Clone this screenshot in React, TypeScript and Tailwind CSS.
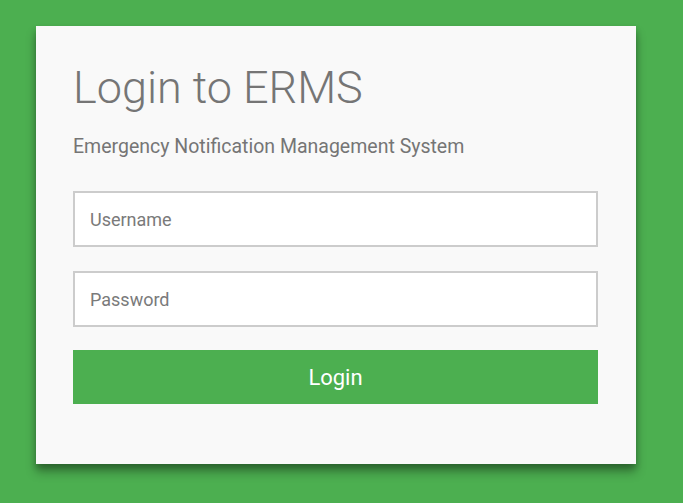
import React from 'react';

export default function App() {
  return (
    <div
      className="min-h-screen bg-[#4caf50] pt-[26px] pl-[36px]"
      style={{ fontFamily: 'Roboto, "Open Sans", sans-serif' }}
    >
      <div className="w-[600px] h-[438px] bg-[#f9f9f9] shadow-[0_8px_10px_rgba(0,0,0,0.3),0_4px_6px_rgba(0,0,0,0.2)] px-[37px] pt-[36px]">
        <h1 className="text-[45px] font-light leading-[52px] text-[#757575]">Login to ERMS</h1>
        <p className="mt-[21px] text-[19.5px] leading-[24px] text-[#757575]">
          Emergency Notification Management System
        </p>
        <form className="mt-[32px] flex flex-col" onSubmit={(e) => e.preventDefault()}>
          <input
            type="text"
            placeholder="Username"
            className="h-[56px] w-[525px] bg-white border-2 border-[#cccccc] px-[15px] text-[18px] text-[#333] placeholder:text-[#7a7a7a] outline-none"
          />
          <input
            type="password"
            placeholder="Password"
            className="mt-[24px] h-[56px] w-[525px] bg-white border-2 border-[#cccccc] px-[15px] text-[18px] text-[#333] placeholder:text-[#7a7a7a] outline-none"
          />
          <button
            type="submit"
            className="mt-[23px] h-[54px] w-[525px] bg-[#4caf50] text-white text-[22px] cursor-pointer"
          >
            Login
          </button>
        </form>
      </div>
    </div>
  );
}
